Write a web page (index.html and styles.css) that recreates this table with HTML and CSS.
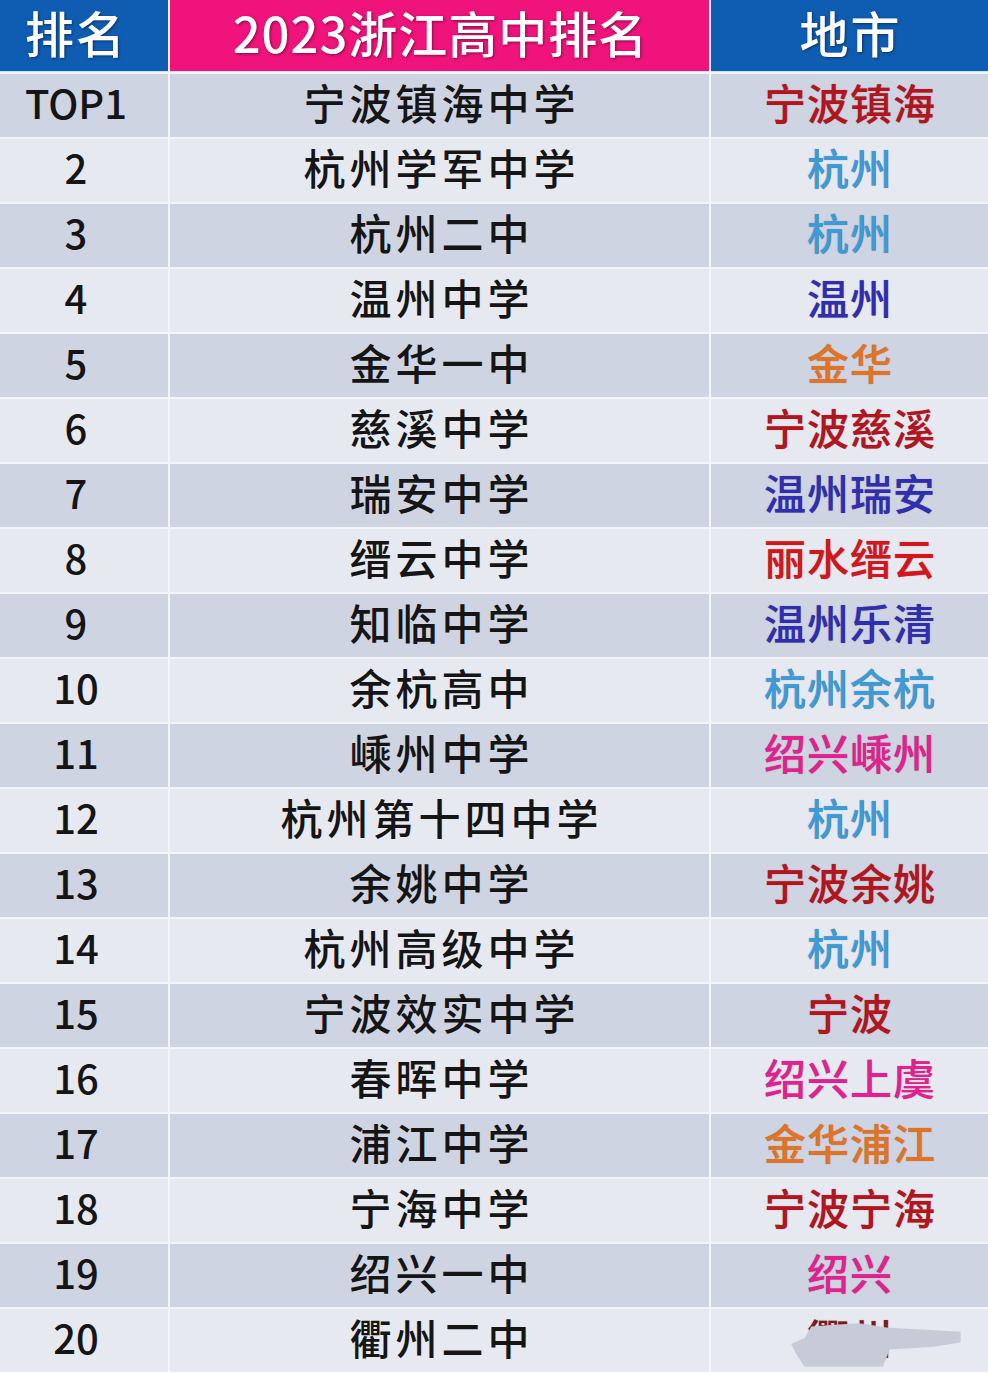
FILE: index.html
```html
<!DOCTYPE html>
<html lang="zh-CN">
<head>
<meta charset="utf-8">
<title>2023浙江高中排名</title>
<link rel="stylesheet" href="styles.css">
</head>
<body>
<div class="table">
  <div class="th th-blue th-rank">排名</div>
  <div class="th th-pink">2023浙江高中排名</div>
  <div class="th th-blue">地市</div>

  <div class="td rank dark">TOP1</div><div class="td school dark">宁波镇海中学</div><div class="td city dark c-nb">宁波镇海</div>
  <div class="td rank">2</div><div class="td school">杭州学军中学</div><div class="td city c-hz">杭州</div>
  <div class="td rank dark">3</div><div class="td school dark">杭州二中</div><div class="td city dark c-hz">杭州</div>
  <div class="td rank">4</div><div class="td school">温州中学</div><div class="td city c-wz">温州</div>
  <div class="td rank dark">5</div><div class="td school dark">金华一中</div><div class="td city dark c-jh">金华</div>
  <div class="td rank">6</div><div class="td school">慈溪中学</div><div class="td city c-nb">宁波慈溪</div>
  <div class="td rank dark">7</div><div class="td school dark">瑞安中学</div><div class="td city dark c-wz">温州瑞安</div>
  <div class="td rank">8</div><div class="td school">缙云中学</div><div class="td city c-ls">丽水缙云</div>
  <div class="td rank dark">9</div><div class="td school dark">知临中学</div><div class="td city dark c-wz">温州乐清</div>
  <div class="td rank">10</div><div class="td school">余杭高中</div><div class="td city c-hz">杭州余杭</div>
  <div class="td rank dark">11</div><div class="td school dark">嵊州中学</div><div class="td city dark c-sx">绍兴嵊州</div>
  <div class="td rank">12</div><div class="td school">杭州第十四中学</div><div class="td city c-hz">杭州</div>
  <div class="td rank dark">13</div><div class="td school dark">余姚中学</div><div class="td city dark c-nb">宁波余姚</div>
  <div class="td rank">14</div><div class="td school">杭州高级中学</div><div class="td city c-hz">杭州</div>
  <div class="td rank dark">15</div><div class="td school dark">宁波效实中学</div><div class="td city dark c-nb">宁波</div>
  <div class="td rank">16</div><div class="td school">春晖中学</div><div class="td city c-sx">绍兴上虞</div>
  <div class="td rank dark">17</div><div class="td school dark">浦江中学</div><div class="td city dark c-jh">金华浦江</div>
  <div class="td rank">18</div><div class="td school">宁海中学</div><div class="td city c-nb">宁波宁海</div>
  <div class="td rank dark">19</div><div class="td school dark">绍兴一中</div><div class="td city dark c-sx">绍兴</div>
  <div class="td rank">20</div><div class="td school">衢州二中</div><div class="td city last-city"><span class="qz">衢州</span><span class="smudge"></span></div>
</div>
</body>
</html>
```

FILE: styles.css
```css
html, body {
  margin: 0;
  padding: 0;
  background: #ffffff;
}

body {
  font-family: "Noto Sans CJK SC", "Noto Sans", sans-serif;
  width: 988px;
  height: 1374px;
  overflow: hidden;
}

.table {
  display: grid;
  grid-template-columns: 168px 539px 1fr;
  grid-template-rows: 72px repeat(20, 63px);
  column-gap: 2px;
  row-gap: 2px;
  background: #f3f5fa;
}

.th {
  display: flex;
  align-items: center;
  justify-content: center;
  color: #ffffff;
  font-size: 49px;
  font-weight: 500;
  line-height: 1.1;
  letter-spacing: 2px;
  padding-left: 2px;
  padding-bottom: 8px;
  text-shadow: 1px 1px 3px rgba(0, 0, 0, 0.45);
  border-bottom: 1px solid #bfe9f6;
}

.th-rank {
  padding-right: 18px;
}

.th-blue {
  background: #0f5db3;
}

.th-pink {
  background: #f0137b;
  letter-spacing: 1px;
}

.td {
  display: flex;
  align-items: center;
  justify-content: center;
  background: #e7e9f1;
  font-size: 42px;
  font-weight: 500;
  line-height: 1;
  padding-bottom: 8px;
  color: #151515;
}

.td.dark {
  background: #cfd4e2;
}

.rank {
  font-size: 40px;
  padding-right: 16px;
}

.school {
  letter-spacing: 4px;
  padding-left: 4px;
}

.city {
  letter-spacing: 1px;
  padding-left: 1px;
  text-shadow: 0 0 1px rgba(60, 0, 0, 0.45);
}

.c-nb { color: #b3151f; }
.c-hz { color: #3a9bd6; }
.c-wz { color: #2e2fb0; }
.c-jh { color: #e07424; }
.c-ls { color: #d4161c; }
.c-sx { color: #e3208f; }

.last-city {
  position: relative;
  overflow: hidden;
}

.qz {
  color: #7e1a22;
}

.smudge {
  position: absolute;
  left: 80px;
  top: 14px;
  width: 170px;
  height: 44px;
  background: #c6cbd7;
  clip-path: polygon(0% 48%, 8% 34%, 12% 8%, 40% 0%, 56% 10%, 100% 20%, 100% 44%, 84% 54%, 58% 60%, 54% 100%, 8% 100%, 3% 70%);
  filter: blur(1px);
}
```
